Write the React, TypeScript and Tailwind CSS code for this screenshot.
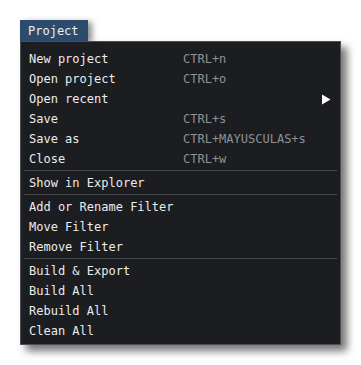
import React from "react";

type Item = { label: string; shortcut?: string; submenu?: boolean };

const groups: Item[][] = [
  [
    { label: "New project", shortcut: "CTRL+n" },
    { label: "Open project", shortcut: "CTRL+o" },
    { label: "Open recent", submenu: true },
    { label: "Save", shortcut: "CTRL+s" },
    { label: "Save as", shortcut: "CTRL+MAYUSCULAS+s" },
    { label: "Close", shortcut: "CTRL+w" },
  ],
  [{ label: "Show in Explorer" }],
  [
    { label: "Add or Rename Filter" },
    { label: "Move Filter" },
    { label: "Remove Filter" },
  ],
  [
    { label: "Build & Export" },
    { label: "Build All" },
    { label: "Rebuild All" },
    { label: "Clean All" },
  ],
];

function Row({ item }: { item: Item }) {
  return (
    <div className="flex h-5 items-center pl-2 pr-2 text-[12px] leading-5 text-[#ececec]">
      <span className="w-[154px] shrink-0">{item.label}</span>
      {item.shortcut && (
        <span className="text-[#8e9196] font-light">{item.shortcut}</span>
      )}
      {item.submenu && (
        <span className="ml-auto mr-[1px] flex items-center">
          <svg width="10" height="11" viewBox="0 0 10 11">
            <path d="M1 0.5 L9.5 5.5 L1 10.5 Z" fill="#ffffff" />
          </svg>
        </span>
      )}
    </div>
  );
}

export default function App() {
  return (
    <div
      className="h-[365px] w-[361px] bg-white pl-5 pt-5"
      style={{ fontFamily: '"DejaVu Sans Mono", "Liberation Mono", monospace' }}
    >
      <div className="flex h-[21px] w-[68px] items-center bg-[#2d4b6c] pl-[8px] text-[12px] text-[#f0f0f0] shadow-[4px_2px_6px_rgba(0,0,0,0.45)]">
        Project
      </div>
      <div className="w-[321px] border border-[#4c4f54] bg-[#1b1d21] pb-[3px] pt-[7px] shadow-[6px_6px_8px_rgba(0,0,0,0.55)]">
        {groups.map((g, gi) => (
          <div key={gi}>
            {gi > 0 && <div className="mx-[3px] mb-[2px] mt-px h-px bg-[#45484d]" />}
            {g.map((item) => (
              <Row key={item.label} item={item} />
            ))}
          </div>
        ))}
      </div>
    </div>
  );
}
